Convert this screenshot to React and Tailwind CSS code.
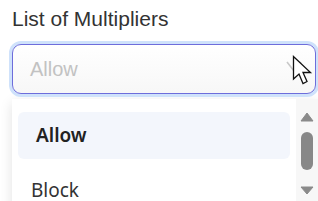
export default function App() {
  return (
    <div className="relative w-[318px] h-[201px] overflow-hidden bg-white pl-[12px] pr-[2px]">
      <div className="pt-[5px] h-[36px] text-[21px] leading-[28px] text-[#333333] font-['Liberation_Sans',Arial,sans-serif]">
        List of Multipliers
      </div>
      <div className="mt-[8px] h-[50px] rounded-[9px] border-[1.5px] border-[#6d6ddb] ring-[3px] ring-[#cfe2fb] bg-gradient-to-b from-white to-[#f7f7f7] flex items-center pl-[17px] relative">
        <span className="text-[20px] text-[#c2c2c2] font-['Liberation_Sans',Arial,sans-serif]">Allow</span>
        <svg className="absolute left-[273px] top-[16px]" width="16" height="12" viewBox="0 0 16 12">
          <path d="M1 1 L8 10 L15 1" fill="none" stroke="#c8c8c8" strokeWidth="1.6" />
        </svg>
      </div>
      <div className="mt-[5px] -mr-[2px] h-[120px] bg-white shadow-[0_4px_12px_rgba(0,0,0,0.12)] flex font-['Noto_Sans',sans-serif]">
        <div className="flex-1 pl-[6px] pr-[6px] pt-[13px] flex flex-col gap-[8px]">
          <div className="h-[47px] shrink-0 rounded-[6px] bg-[#f3f6fc] flex items-center pl-[18px] text-[19px] font-semibold text-[#222222]">
            Allow
          </div>
          <div className="h-[47px] shrink-0 flex items-center pl-[13px] text-[19px] text-[#333333]">
            Block
          </div>
        </div>
        <div className="w-[22px] bg-[#f7f7f7] flex flex-col items-center pt-[13px]">
          <svg width="14" height="10" viewBox="0 0 14 10">
            <path d="M7 1 L13 9 L1 9 Z" fill="#8a8a8a" stroke="#8a8a8a" strokeLinejoin="round" />
          </svg>
          <div className="mt-[10px] w-[12px] h-[38px] rounded-full bg-[#888888]" />
          <svg className="mt-[16px]" width="14" height="9" viewBox="0 0 14 9">
            <path d="M1 1 L13 1 L7 8 Z" fill="#8a8a8a" stroke="#8a8a8a" strokeLinejoin="round" />
          </svg>
        </div>
      </div>
      <svg className="absolute left-[292px] top-[55px]" width="22" height="31" viewBox="0 0 22 31">
        <path d="M1.5 1.5 L1.5 24 L7 19 L11 28.5 L15 26.5 L11 17.5 L18.5 17.5 Z" fill="white" stroke="#111111" strokeWidth="1.3" strokeLinejoin="miter" />
      </svg>
    </div>
  );
}
